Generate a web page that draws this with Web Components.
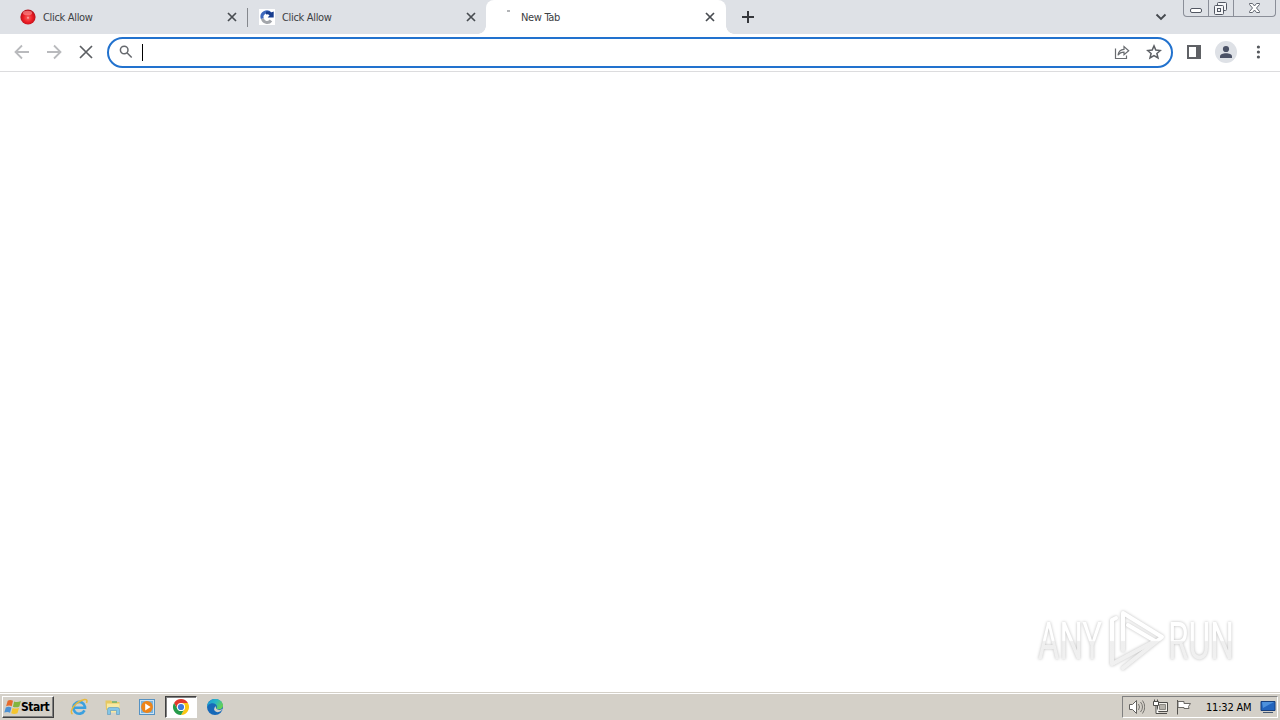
<!DOCTYPE html>
<html lang="en">
<head>
<meta charset="utf-8">
<title>New Tab</title>
<style>
  html, body { margin: 0; height: 100%; }
  body {
    width: 1280px;
    height: 720px;
    overflow: hidden;
    background: #fff;
    font-family: "DejaVu Sans Condensed", "DejaVu Sans", sans-serif;
    font-size: 11px;
  }
</style>
</head>
<body>
<desktop-screen>
  <tab-strip slot="top">
    <browser-tab label="Click Allow" divider>
      <svg slot="icon" width="16" height="16" viewBox="0 0 16 16">
        <defs><radialGradient id="ball" cx=".5" cy=".55" r=".5">
          <stop offset="0" stop-color="#ffc4c4"/><stop offset=".2" stop-color="#f34a4a"/>
          <stop offset=".6" stop-color="#ee1c24"/><stop offset="1" stop-color="#b8121c"/>
        </radialGradient></defs>
        <circle cx="8" cy="8" r="7.600" fill="url(#ball)"/>
        <ellipse cx="7.500" cy="4" rx="4.600" ry="2.300" fill="#ff9a9a" opacity=".6"/>
      </svg>
    </browser-tab>
    <browser-tab label="Click Allow">
      <svg slot="icon" width="16" height="16" viewBox="0 0 16 16">
        <path fill="#fff" d="M0 0h16v16H0z"/>
        <path d="M3.400 9.500A4.800 4.800 0 0 0 12 11.500" fill="none" stroke="#a3a6ab" stroke-width="3"/>
        <path d="M3.300 9.500A4.900 4.900 0 0 1 11.500 4.500" fill="none" stroke="#3f69bd" stroke-width="3"/>
        <path d="M7 2.600Q10 1.800 12 3.500L14.700 2.500V8.600H8.700L10.600 6.200Q9 5 7 5.500z" fill="#183d8f"/>
      </svg>
    </browser-tab>
    <browser-tab label="New Tab" active>
      <svg slot="icon" width="16" height="16" viewBox="0 0 16 16"><path d="M9 2h3" stroke="#b3b5b8" stroke-width="2"/></svg>
    </browser-tab>
  </tab-strip>
  <browser-toolbar slot="top"></browser-toolbar>
  <run-watermark></run-watermark>
  <task-bar slot="bottom"></task-bar>
</desktop-screen>

<script>
class DesktopScreen extends HTMLElement {
  constructor() {
    super();
    this.attachShadow({ mode: 'open' }).innerHTML = `
      <style>
        :host { display: flex; flex-direction: column; width: 1280px; height: 720px; }
        main {
          flex: 1;
          display: flex;
          justify-content: flex-end;
          align-items: flex-end;
          padding-bottom: 15px;
          background: #fff;
        }
      </style>
      <slot name="top"></slot>
      <main><slot></slot></main>
      <slot name="bottom"></slot>
    `;
  }
}

class BrowserTab extends HTMLElement {
  constructor() {
    super();
    this.attachShadow({ mode: 'open' }).innerHTML = `
      <style>
        :host {
          display: flex;
          align-items: center;
          box-sizing: border-box;
          position: relative;
          width: 239px;
          height: 34px;
          padding: 0 7px 0 12px;
          color: #3c4043;
        }
        :host([active]) { width: 240px; padding-right: 8px; background: #fff; border-radius: 8px 8px 0 0; }
        /* flared feet of the active tab */
        :host([active])::before, :host([active])::after {
          content: "";
          position: absolute;
          bottom: 0;
          width: 8px;
          height: 8px;
        }
        :host([active])::before { left: -8px; background: radial-gradient(circle at 0 0, transparent 7.5px, #fff 8px); }
        :host([active])::after { right: -8px; background: radial-gradient(circle at 100% 0, transparent 7.5px, #fff 8px); }
        :host([divider])::after {
          content: "";
          position: absolute;
          right: -1px;
          top: 8px;
          width: 1px;
          height: 19px;
          background: #85888d;
        }
        .icon { display: flex; width: 16px; margin-right: 7px; }
        .label { flex: 1; line-height: 16px; padding-top: 1px; letter-spacing: -0.32px; white-space: nowrap; }
      </style>
      <span class="icon"><slot name="icon"></slot></span>
      <span class="label">${this.getAttribute('label')}</span>
      <svg width="16" height="16" viewBox="0 0 16 16"><path d="M4 4l8 8M12 4l-8 8" stroke="#484c51" stroke-width="1.700"/></svg>
    `;
  }
}

class TabStrip extends HTMLElement {
  constructor() {
    super();
    this.attachShadow({ mode: 'open' }).innerHTML = `
      <style>
        :host { display: flex; height: 34px; padding-left: 8px; background: #dee1e6; }
        .add { margin: 9px 0 0 14px; }
        .search { margin: 9px 14px 0 auto; }
        .controls {
          display: flex;
          box-sizing: border-box;
          width: 93px;
          height: 17px;
          margin-right: 4px;
          border: 1px solid #8a8e98;
          border-top: 0;
          border-radius: 0 0 4px 4px;
        }
        .controls svg + svg { border-left: 1px solid #8a8e98; }
      </style>
      <slot></slot>
      <svg class="add" width="16" height="16" viewBox="0 0 16 16"><path d="M8 2v12M2 8h12" stroke="#35373c" stroke-width="2"/></svg>
      <svg class="search" width="16" height="16" viewBox="0 0 16 16"><path d="M3.500 5.500L8 10l4.500-4.500" fill="none" stroke="#45494f" stroke-width="1.900"/></svg>
      <div class="controls">
        <svg width="24" height="16" viewBox="0 0 24 16"><rect x="6.500" y="8.500" width="11" height="4" rx="1.500" fill="#fff" stroke="#525762"/></svg>
        <svg width="24" height="16" viewBox="0 0 24 16">
          <g fill="#f5f6f8" stroke="#525762"><rect x="8.500" y="2.500" width="9" height="8" rx="1"/><rect x="5.500" y="5.500" width="9" height="9" rx="1"/><rect x="8.500" y="8.500" width="3" height="3"/></g>
        </svg>
        <svg width="41" height="16" viewBox="0 0 41 16">
          <path d="M15.500 3.500h3l2 2.500 2-2.500h3v1L22.500 8l3 3.500v1h-3l-2-2.500-2 2.500h-3v-1L18.500 8l-3-3.500z" fill="#fff" stroke="#626771"/>
        </svg>
      </div>
    `;
  }
}

class BrowserToolbar extends HTMLElement {
  constructor() {
    super();
    this.attachShadow({ mode: 'open' }).innerHTML = `
      <style>
        :host {
          display: flex;
          align-items: center;
          box-sizing: border-box;
          height: 38px;
          padding: 0 14px;
          background: #fff;
          border-bottom: 1px solid #dcdcde;
        }
        svg { display: block; flex: none; }
        .nav { display: flex; gap: 16px; width: 93px; padding-bottom: 1px; }
        .omnibox {
          display: flex;
          align-items: center;
          box-sizing: border-box;
          width: 1066px;
          height: 31px;
          padding: 0 9px 1px;
          border: 2px solid #2272ce;
          border-radius: 16px;
        }
        .caret { width: 1px; height: 17px; margin: 1px 0 0 8px; background: #000; }
        .actions { display: flex; gap: 16px; margin-left: auto; }
        .side { display: flex; align-items: center; gap: 13px; margin-left: 13px; padding-bottom: 1px; }
      </style>
      <div class="nav">
        <svg width="16" height="16" viewBox="0 0 16 16"><path d="M15 8H2M8 1.500L1.500 8 8 14.500" fill="none" stroke="#b9babd" stroke-width="1.800"/></svg>
        <svg width="16" height="16" viewBox="0 0 16 16"><path d="M1 8h13M8 1.500L14.500 8 8 14.500" fill="none" stroke="#b9babd" stroke-width="1.800"/></svg>
        <svg width="16" height="16" viewBox="0 0 16 16"><path d="M2 2l12 12M14 2L2 14" stroke="#5c5f63" stroke-width="1.700"/></svg>
      </div>
      <div class="omnibox">
        <svg width="16" height="16" viewBox="0 0 16 16"><g fill="none" stroke="#66696e" stroke-width="1.500"><circle cx="6.200" cy="6" r="3.800"/><path d="M9 8.800l4.700 4.700"/></g></svg>
        <div class="caret"></div>
        <div class="actions">
          <svg width="16" height="16" viewBox="0 0 16 16"><g fill="none" stroke="#696c70" stroke-width="1.200"><path d="M1.500 4.500v10h11v-3"/><path d="M4 11.300Q4.700 5.600 10 5.400V2.600l4.700 4.100L10 10.800V8.100Q6 8.100 4 11.300z"/></g></svg>
          <svg width="16" height="16" viewBox="0 0 16 16"><path d="M8 1.900l1.800 4.200 4.600.4-3.500 3 1.100 4.500L8 11.600 4 14l1.100-4.500-3.500-3 4.600-.4z" fill="none" stroke="#5c5f64" stroke-width="1.500"/></svg>
        </div>
      </div>
      <div class="side">
        <svg width="16" height="16" viewBox="0 0 16 16"><path d="M1 1h14v14H1zM3 3v10h7V3z" fill="#5f6165" fill-rule="evenodd"/></svg>
        <svg width="22" height="22" viewBox="0 0 22 22"><circle cx="11" cy="11" r="11" fill="#dee1e6"/><circle cx="11" cy="8" r="3.100" fill="#4b5266"/><path d="M5 17v-1.500C5 11.300 17 11.300 17 15.500V17z" fill="#4b5266"/></svg>
        <svg width="16" height="16" viewBox="0 0 16 16" fill="#55585d"><circle cx="8.400" cy="3" r="1.600"/><circle cx="8.400" cy="8" r="1.600"/><circle cx="8.400" cy="13" r="1.600"/></svg>
      </div>
    `;
  }
}

class RunWatermark extends HTMLElement {
  constructor() {
    super();
    this.attachShadow({ mode: 'open' }).innerHTML = `
      <style>
        :host { display: block; width: 250px; height: 72px; }
        svg { display: block; filter: drop-shadow(0 0 1.500px rgba(0,0,0,.26)); }
        text { font: 51px "Roboto", sans-serif; }
      </style>
      <svg width="250" height="72" viewBox="1030 605 250 72">
        <defs><linearGradient id="fade" gradientUnits="userSpaceOnUse" x1="0" y1="610" x2="0" y2="672">
          <stop offset="0" stop-color="#fff"/><stop offset=".49" stop-color="#fff"/>
          <stop offset=".51" stop-color="#efefef"/><stop offset="1" stop-color="#f1f1f1"/>
        </linearGradient></defs>
        <text x="1038" y="659" textLength="64" lengthAdjust="spacingAndGlyphs" fill="url(#fade)">ANY</text>
        <text x="1168" y="659" textLength="66" lengthAdjust="spacingAndGlyphs" fill="url(#fade)">RUN</text>
        <g fill="none" stroke="url(#fade)" stroke-width="4" stroke-linejoin="round" stroke-linecap="round">
          <path d="M1116 618L1112 620V664L1155 641L1128 625"/>
          <path d="M1123 650V613L1162 637L1123 668"/>
        </g>
      </svg>
    `;
  }
}

class TaskBar extends HTMLElement {
  constructor() {
    super();
    this.attachShadow({ mode: 'open' }).innerHTML = `
      <style>
        :host {
          display: flex;
          box-sizing: border-box;
          height: 28px;
          padding: 2px 2px 0;
          background: #d4d0c8;
          border-top: 1px solid #d4d0c8;
          box-shadow: inset 0 1px #fff;
        }
        svg { display: block; flex: none; }
        .start {
          display: flex;
          align-items: center;
          box-sizing: border-box;
          width: 52px;
          height: 22px;
          margin-top: 1px;
          padding-left: 1px;
          border: 1px solid;
          border-color: #fff #404040 #404040 #fff;
          box-shadow: inset -1px -1px #808080;
          font: bold 12px "DejaVu Sans Condensed", sans-serif;
          letter-spacing: -0.5px;
          color: #000;
        }
        .start span { margin-left: -1px; }
        .quick { display: flex; gap: 2px; margin: 1px 0 0 9px; }
        .quick span {
          display: flex;
          align-items: center;
          justify-content: center;
          box-sizing: border-box;
          width: 32px;
          height: 22px;
          border: 1px solid transparent;
        }
        .quick .open { background: #fff; border-color: #404040 #fff #fff #404040; box-shadow: inset 1px 1px #808080; }
        .tray {
          display: flex;
          align-items: center;
          box-sizing: border-box;
          width: 156px;
          height: 22px;
          margin: 1px 0 0 auto;
          padding: 0 1px 0 6px;
          border: 1px solid;
          border-color: #808080 #fff #fff #808080;
        }
        .tray svg { margin-right: 7px; }
        .clock { width: 49px; margin-left: 7px; letter-spacing: -0.2px; white-space: nowrap; color: #000; }
        .tray .desk { margin: 0 0 0 auto; }
      </style>
      <div class="start">
        <svg width="18" height="18" viewBox="0 0 17 16">
          <path d="M3.500 2Q6 .5 8.500 2.200L7.300 7.300Q5 5.800 2 7.200z" fill="#e66a2c"/>
          <path d="M9.600 2.700Q12.500 4 16 2.300L14.500 7.500Q11.500 9 8.400 7.700z" fill="#82b540"/>
          <path d="M1.700 8.400Q4.500 7 7 8.500L5.700 13.400Q3.300 12 .3 13.300z" fill="#4c91d4"/>
          <path d="M8.100 8.900Q11 10.200 14.200 8.700L12.700 13.900Q9.800 15.300 6.800 14z" fill="#f5c52e"/>
        </svg>
        <span>Start</span>
      </div>
      <div class="quick">
        <span><svg width="18" height="18" viewBox="0 0 18 18">
          <path d="M14.500 12.400A5.900 5.900 0 1 1 15 8.800V9.800H4.500" fill="none" stroke="#3ba0df" stroke-width="2.600"/>
          <path d="M2.500 16C-1.500 13.500 5.500 3.500 14.500 1.500Q18 1.200 16.500 5" fill="none" stroke="#e8b93c" stroke-width="1.500"/>
        </svg></span>
        <span><svg width="18" height="18" viewBox="0 0 18 18">
          <path d="M1.500 4.500V2.500h5.500l1.500 1.500H15.500V12H2z" fill="#e6c861"/><path d="M3 5.500h12.500v9H3z" fill="#f8e9a1"/>
          <path d="M8 4h5" stroke="#6cb26c" stroke-width="1.500"/>
          <path d="M3.500 16.500v-5q0-2 2-2h8q2 0 2 2v5h-3v-4h-6v4z" fill="#83c5e7" stroke="#5796bd" stroke-width=".6"/>
        </svg></span>
        <span><svg width="18" height="18" viewBox="0 0 18 18">
          <rect x="1.500" y="1.500" width="15" height="15" fill="#cce3f4" stroke="#5592c3"/><rect x="3" y="3" width="12" height="12" fill="#79b4df"/>
          <circle cx="9" cy="9" r="5.900" fill="#ee8418"/><path d="M7.200 5.500v7L12.600 9z" fill="#fff"/>
        </svg></span>
        <span class="open"><svg width="18" height="18" viewBox="0 0 18 18">
          <path d="M2.070 5A8 8 0 0 1 15.930 5H9L5.540 11z" fill="#e3392d"/>
          <path d="M15.930 5A8 8 0 0 1 9 17L12.460 11 9 5z" fill="#fbc613"/>
          <path d="M9 17A8 8 0 0 1 2.070 5L5.540 11A4 4 0 0 0 12.460 11z" fill="#269b4a"/>
          <circle cx="9" cy="9" r="4.100" fill="#fff"/><circle cx="9" cy="9" r="3.100" fill="#3e79dd"/>
        </svg></span>
        <span><svg width="18" height="18" viewBox="0 0 18 18">
          <defs><linearGradient id="wave" x1="0" y1="0" x2="1" y2=".5"><stop stop-color="#1895d7"/><stop offset=".55" stop-color="#28b6c6"/><stop offset="1" stop-color="#65d156"/></linearGradient></defs>
          <circle cx="9" cy="9" r="8" fill="#1769b8"/>
          <path d="M1 9C1.500-1.500 16.500-1.500 17 7.500C17 11.500 12 12 10.200 10.800C12.500 7.500 9 4.500 5.500 5.300Q2 6 1 9z" fill="url(#wave)"/>
          <path d="M9.500 8Q6.200 12.500 10.600 14Q13.500 14.800 16.600 11.600L17.500 14L15 16Q18 11.500 16.500 11Q12.500 12.900 10.200 10.800z" fill="#d4d0c8"/>
        </svg></span>
      </div>
      <div class="tray">
        <svg width="16" height="16" viewBox="0 0 16 16"><path d="M.5 5.500h3l4-4v13l-4-4h-3z" fill="#fff" stroke="#62615e"/><path d="M9.500 5q2 3 0 6M11.500 3q4 5 0 10M13.500 1.500q4.500 6.500 0 13" fill="none" stroke="#777571"/></svg>
        <svg width="17" height="16" viewBox="0 0 17 16"><path d="M5.500 3.500h10v9h-10zM6 14.500h9" fill="#f3f1ec" stroke="#4d4c49"/><path d="M7.500 5.500h6v5h-6z" fill="#b5b2ab" stroke="#8b8983"/><path d="M1.500 2.500h5v4h-5zM2.500.5v2M5.500.5v2M4 6.500v8h3" fill="#fff" stroke="#4d4c49"/></svg>
        <svg width="16" height="16" viewBox="0 0 16 16"><path d="M1.500 1v14.500" stroke="#55534f"/><path d="M2 2.500h6v2h6.500l-2 3 .5 2H8V8.500H2z" fill="#fff" stroke="#6b6965"/></svg>
        <span class="clock">11:32 AM</span>
        <svg class="desk" width="16" height="16" viewBox="0 0 16 16"><path d="M1 2.500h14v9H1z" fill="#2364bd" stroke="#173f7e"/><path d="M2 3h12L3 9z" fill="#4e91dc"/><path d="M3 13.500h10" stroke="#42556f"/></svg>
      </div>
    `;
  }
}

customElements.define('desktop-screen', DesktopScreen);
customElements.define('browser-tab', BrowserTab);
customElements.define('tab-strip', TabStrip);
customElements.define('browser-toolbar', BrowserToolbar);
customElements.define('run-watermark', RunWatermark);
customElements.define('task-bar', TaskBar);
</script>
</body>
</html>
